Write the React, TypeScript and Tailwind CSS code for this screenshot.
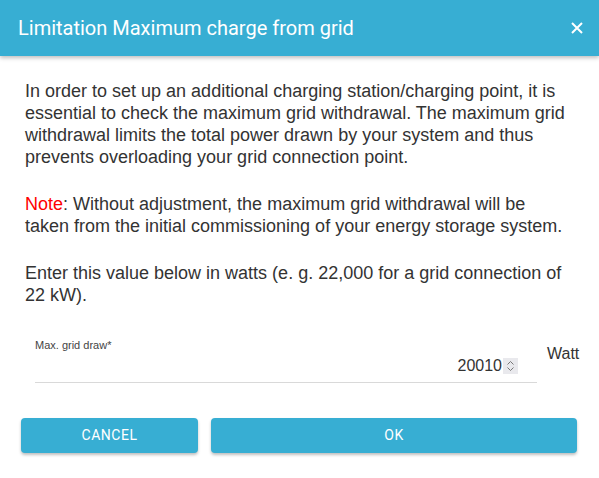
import React from "react";

export default function App() {
  return (
    <div className="w-[599px] h-[478px] bg-white relative overflow-hidden" style={{ fontFamily: "'Liberation Sans', Arial, sans-serif" }}>
      <div className="h-[56px] bg-[#37aed3] flex items-center justify-between pl-[18px] pr-[16px] shadow-[0_2px_4px_rgba(0,0,0,0.25)] relative z-10">
        <div className="text-white text-[20px] font-['Roboto',sans-serif] leading-none">Limitation Maximum charge from grid</div>
        <svg width="12" height="12" viewBox="0 0 12 12">
          <path d="M1 1L11 11M11 1L1 11" stroke="white" strokeWidth="2" />
        </svg>
      </div>
      <div className="pt-[24px] px-[25px] text-[18px] leading-[22px] text-[#333]">
        <p className="mb-[25px]">In order to set up an additional charging station/charging point, it is essential to check the maximum grid withdrawal. The maximum grid withdrawal limits the total power drawn by your system and thus prevents overloading your grid connection point.</p>
        <p className="mb-[25px]"><span className="text-[#ff0000]">Note</span>: Without adjustment, the maximum grid withdrawal will be taken from the initial commissioning of your energy storage system.</p>
        <p>Enter this value below in watts (e. g. 22,000 for a grid connection of 22 kW).</p>
      </div>
      <div className="flex items-start pl-[35px] mt-[33px]">
        <div className="w-[502px] border-b border-[#d9d9d9] h-[44px] flex flex-col pr-[19px]">
          <div className="text-[11px] leading-[12px] text-[#444]">Max. grid draw*</div>
          <div className="flex justify-end items-center mt-[6px]">
            <span className="text-[16px] leading-[18px] text-[#333]">20010</span>
            <span className="w-[15px] h-[16px] bg-[#e9e9ed] flex items-center justify-center ml-[1px]">
              <svg width="9" height="12" viewBox="0 0 9 12">
                <path d="M1.5 4.5L4.5 1.5L7.5 4.5M1.5 7.5L4.5 10.5L7.5 7.5" stroke="#777" strokeWidth="1" fill="none" />
              </svg>
            </span>
          </div>
        </div>
        <div className="ml-[10px] mt-[6px] text-[16px] leading-[18px] text-[#333]">Watt</div>
      </div>
      <div className="flex gap-[13px] pl-[21px] pr-[22px] mt-[35px]">
        <button className="w-[177px] h-[35px] bg-[#37aed3] rounded-[4px] text-white text-[14px] tracking-[0.5px] font-['Roboto',sans-serif] shadow-[0_2px_3px_rgba(0,0,0,0.25)]">CANCEL</button>
        <button className="flex-1 h-[35px] bg-[#37aed3] rounded-[4px] text-white text-[14px] tracking-[0.5px] font-['Roboto',sans-serif] shadow-[0_2px_3px_rgba(0,0,0,0.25)]">OK</button>
      </div>
    </div>
  );
}
